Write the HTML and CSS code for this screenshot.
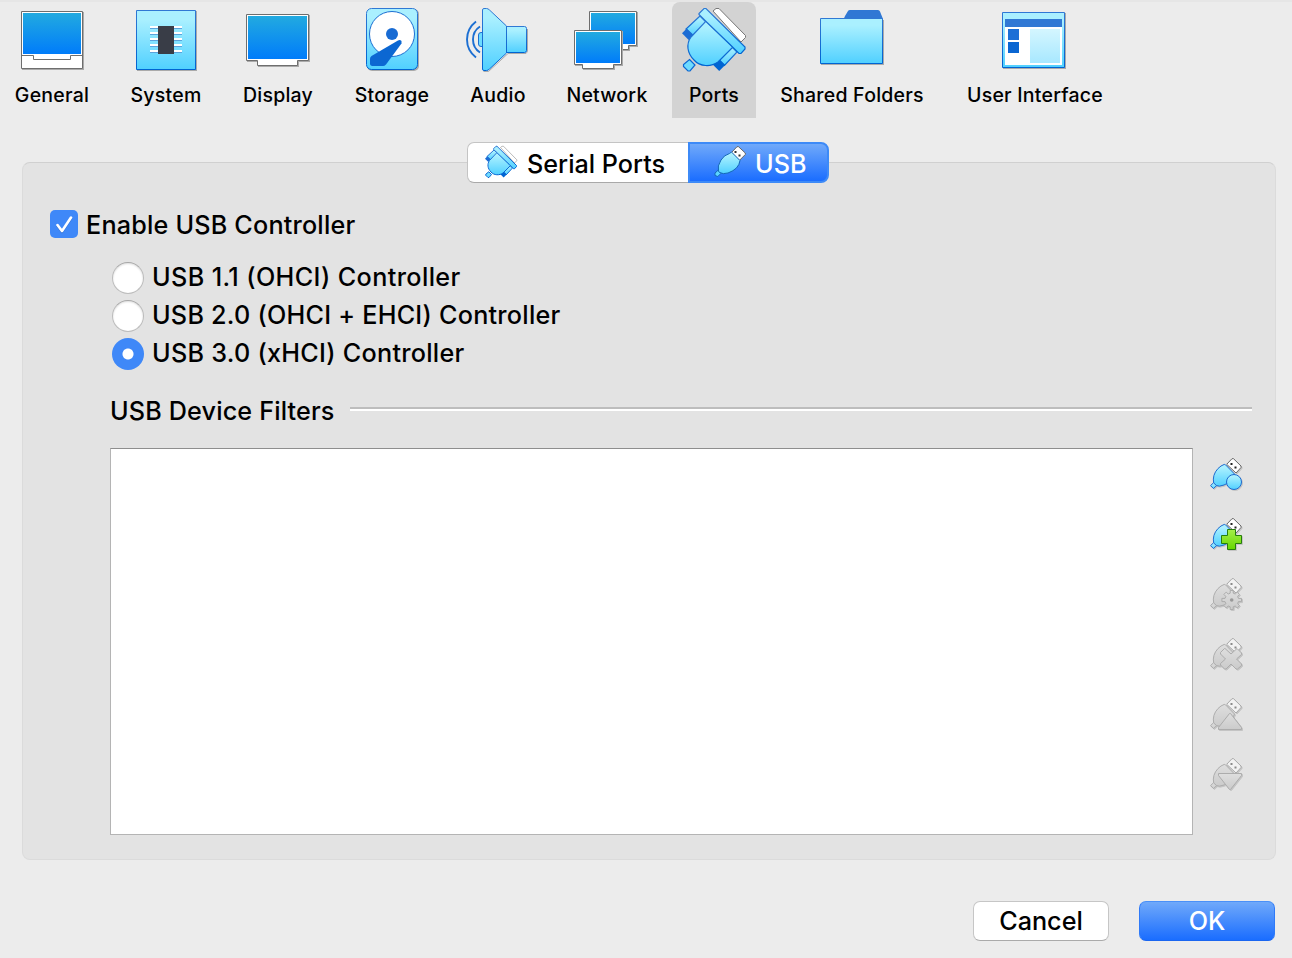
FILE: index.html
```html
<!DOCTYPE html>
<html lang="en">
<head>
<meta charset="utf-8">
<title>Settings - Ports</title>
<link rel="stylesheet" href="styles.css">
</head>
<body>
<svg class="defs" width="0" height="0" aria-hidden="true">
  <defs>
    <linearGradient id="screen" x1="0" y1="0" x2="0" y2="1"><stop offset="0" stop-color="#22aae0"/><stop offset="1" stop-color="#007cfa"/></linearGradient>
    <linearGradient id="aqua" x1="0" y1="0" x2="0" y2="1"><stop offset="0.15" stop-color="#aaf0ff"/><stop offset="1" stop-color="#50d0ff"/></linearGradient>
    <linearGradient id="edge" x1="0" y1="0" x2="0" y2="1"><stop offset="0" stop-color="#3078d4"/><stop offset="1" stop-color="#0064d2"/></linearGradient>
    <linearGradient id="pane" x1="0" y1="0" x2="0" y2="1"><stop offset="0" stop-color="#d4f6ff"/><stop offset="1" stop-color="#a8e8ff"/></linearGradient>
    <linearGradient id="green" x1="0" y1="0" x2="0" y2="1"><stop offset="0" stop-color="#a5ee4a"/><stop offset="1" stop-color="#66d800"/></linearGradient>
    <linearGradient id="gray" x1="0" y1="0" x2="0" y2="1"><stop offset="0" stop-color="#dedede"/><stop offset="1" stop-color="#cbcbcb"/></linearGradient>
    <symbol id="serial" viewBox="678 4 72 72">
      <path class="shell" d="M713 11l3-2.500h3l26.500 27v2l-4.500 4.500z" fill="#fff" stroke="#777"/>
      <path class="line" d="M700 16l-14 13 7 7 14-13z" fill="url(#aqua)" stroke="url(#edge)"/>
      <path d="M686.700 28.500l-4.700 4.800 6.700 6.700 5-5z" fill="#1c6cd4"/>
      <path class="line" d="M730 45l7 7-12.500 13.500-7-7z" fill="url(#aqua)" stroke="url(#edge)"/>
      <path d="M718.700 58.500l6.500 6.500-6 6-6.500-6.500z" fill="#0064d2"/>
      <path class="line" d="M706 21l27 26-15 15c-7 5-18 5-24-2-7-7-8-16-3-23z" fill="url(#aqua)" stroke="url(#edge)"/>
      <path class="line" d="M689.500 59.500l5.500 5.500-5 6h-2l-4.500-4.500v-2z" fill="#6edbff" stroke="#0c67d2"/>
      <path class="line" d="M704 8.500h2l39 38.500v2l-4 4.500h-2l-9-9-25-24-6-6v-1z" fill="url(#aqua)" stroke="url(#edge)"/>
    </symbol>
    <symbol id="plug" viewBox="0 0 32 32">
      <path d="M16.700 6.300L22 .7h1.500L31 8v1.500L26 15z" class="plug-metal"/>
      <path d="M20.500 5h2v2h-2zM24.500 8.500h2v2h-2z" class="plug-holes"/>
      <path d="M14 6.500Q14.800 6.200 15.500 6.800L24.500 16Q22 24 14 27Q9 29 6 27.500L3.700 25Q2 17 8 10.500Q11 7.500 14 6.500z" class="plug-body"/>
      <path d="M3.500 24.800l3 2.800-3 3-3-3z" class="plug-body"/>
    </symbol>
    <symbol id="plug-slim" viewBox="0 0 32 32">
      <path d="M17.500 6.500l5.500-5.800h1.500L31.300 7v1.500l-6 6z" fill="#fff" stroke="#666"/>
      <path d="M20.500 5h2v2h-2zM24.500 8.500h2v2h-2z" fill="#333"/>
      <path d="M15.500 7.500L17.500 6L26 14.500Q25 23 14 27Q9 28.500 5.500 26.500L4.500 25.500Q3 20 7 14Q10 9 15.500 7.500z" fill="url(#aqua)" stroke="#1466b8"/>
      <path d="M3.800 24.500l3 3-3 3-2.800-1v-2.500z" fill="#5cd4ff" stroke="#1466b8"/>
    </symbol>
  </defs>
</svg>

<nav class="toolbar">
  <a class="tool"><svg class="tool-icon" viewBox="16 4 72 72">
    <path d="M22 12h62v58H22z" fill="#aaa"/>
    <path d="M21.500 11.500h61v57h-61z" fill="#fff" stroke="#6e6e6e"/>
    <path d="M23 13h58v41H23z" fill="url(#screen)"/>
    <path d="M21.500 55.500h12v4h37v-4h12" fill="none" stroke="#6e6e6e"/>
  </svg><span>General</span></a>
  <a class="tool"><svg class="tool-icon" viewBox="130 4 72 72">
    <path d="M137 11h60v60h-60z" fill="#aaa"/>
    <path d="M136.500 10.500h59v59h-59z" fill="url(#aqua)" stroke="url(#edge)"/>
    <path d="M150 28.500h32m-32 6h32m-32 6h32m-32 6h32m-32 6h32" stroke="#5ba3dc"/>
    <path d="M150 27h32m-32 6h32m-32 6h32m-32 6h32m-32 6h32" stroke="#fff" stroke-width="2"/>
    <path d="M158 26h16v28h-16z" fill="#393d47"/>
  </svg><span>System</span></a>
  <a class="tool"><svg class="tool-icon" viewBox="242 4 72 72">
    <path d="M247 15h63v47h-11v5h-41v-5h-11z" fill="#aaa"/>
    <path d="M246.500 14.500h62v46h-11v5h-40v-5h-11z" fill="#fff" stroke="#6e6e6e"/>
    <path d="M248 16h59v43h-59z" fill="url(#screen)"/>
  </svg><span>Display</span></a>
  <a class="tool"><svg class="tool-icon" viewBox="356 4 72 72">
    <rect x="367" y="9" width="52" height="62" rx="5" fill="#aaa"/>
    <rect x="366.500" y="8.500" width="51" height="61" rx="5" fill="url(#aqua)" stroke="url(#edge)"/>
    <circle cx="392" cy="34" r="22.500" fill="#fff" stroke="#1c6fd2"/>
    <circle cx="392" cy="34" r="6" fill="#186bd3"/>
    <path d="M398 40.500q2-1 3.500.5v2.500L386 64.500q-1.500 1.500-3 1.500h-11q-2-.5-2-2v-5q0-2 1.500-3z" fill="#0c67d2"/>
  </svg><span>Storage</span></a>
  <a class="tool"><svg class="tool-icon" viewBox="462 4 72 72">
    <path d="M483.500 71.500h5l19.500-18h18l1.500-2V29" fill="none" stroke="#aaa"/>
    <rect x="478.500" y="32.500" width="8" height="14" rx="2.500" fill="#6cdcff" stroke="#1c6fd2"/>
    <rect x="503" y="26.500" width="23.500" height="26" rx="2" fill="url(#aqua)" stroke="url(#edge)"/>
    <path d="M482.500 10q0-1.500 1.500-1.500h2.500q1.500 0 3 1.500l17 16v27l-17 16q-1.500 1.500-3 1.500H484q-1.500 0-1.500-1.500z" fill="url(#aqua)" stroke="url(#edge)"/>
    <path d="M480 26.500q-7 4.500-7 13t7 13M476 21.500q-9 7-9 18t9 18" fill="none" stroke="#1c6fd2" stroke-width="1.900"/>
  </svg><span>Audio</span></a>
  <a class="tool network"><svg class="tool-icon" viewBox="570 4 72 72">
    <path d="M590 12h48v35h-8v4h-28V47h-12z" fill="#aaa"/>
    <path d="M589.500 11.500h47v34h-8v4h-28v-4h-11z" fill="#fff" stroke="#6e6e6e"/>
    <path d="M591 13h44v31h-44z" fill="url(#screen)"/>
    <path d="M575 31h48v35h-8v4h-32v-4h-8z" fill="#aaa"/>
    <path d="M574.500 30.500h47v34h-8v4h-31v-4h-8z" fill="#fff" stroke="#6e6e6e"/>
    <path d="M576 32h44v31h-44z" fill="url(#screen)"/>
  </svg><span>Network</span></a>
  <a class="tool selected"><svg class="tool-icon"><use href="#serial"/></svg><span>Ports</span></a>
  <a class="tool"><svg class="tool-icon" viewBox="816 4 72 72">
    <path d="M821 20h63v45h-63z" fill="#aaa"/>
    <path d="M843 19q1.500-1 2-3l3-5q.5-1 2-1h28q1.500 0 2 1.500l3 7.500z" fill="#3078d4"/>
    <path d="M820.500 18.500h62v45h-62z" fill="url(#aqua)" stroke="url(#edge)"/>
  </svg><span>Shared Folders</span></a>
  <a class="tool"><svg class="tool-icon" viewBox="999 4 72 72">
    <path d="M1003 13h63v56h-63z" fill="#aaa"/>
    <path d="M1002.500 12.500h62v55h-62z" fill="url(#aqua)" stroke="url(#edge)"/>
    <path d="M1005 19h57v46h-57z" fill="#fff"/>
    <path d="M1005 19h57v8h-57z" fill="#3078d4"/>
    <path d="M1008 29h11v11h-11z" fill="#1c6fd6"/><path d="M1008 42h11v11h-11z" fill="#0a66d2"/>
    <path d="M1030 29h30v34h-30z" fill="url(#pane)"/>
  </svg><span>User Interface</span></a>
</nav>

<div class="tabs">
  <div class="tab tab-serial"><svg class="tab-icon"><use href="#serial"/></svg><span>Serial Ports</span></div>
  <div class="tab tab-usb"><svg class="usb-icon"><use href="#plug-slim"/></svg><span>USB</span></div>
</div>

<main class="panel">
  <label class="enable"><span class="checkbox"><svg viewBox="0 0 28 28"><path d="M7.500 15l4.500 6L21 7.500" fill="none" stroke="#fff" stroke-width="2.600" stroke-linecap="round" stroke-linejoin="round"/></svg></span><span class="text t-enable">Enable USB Controller</span></label>
  <div class="radios">
    <label class="option"><span class="radio"></span><span class="text t-ohci">USB 1.1 (OHCI) Controller</span></label>
    <label class="option"><span class="radio"></span><span class="text t-ehci">USB 2.0 (OHCI + EHCI) Controller</span></label>
    <label class="option"><span class="radio checked"></span><span class="text t-xhci">USB 3.0 (xHCI) Controller</span></label>
  </div>
  <div class="heading"><span class="text t-filters">USB Device Filters</span><span class="rule"></span></div>
  <div class="filters">
    <div class="list"></div>
    <div class="actions">
      <svg class="action" viewBox="0 0 32 32"><use href="#plug" width="32" height="32"/><circle cx="24" cy="24" r="7.500" class="plug-body"/></svg>
      <svg class="action" viewBox="0 0 32 32"><use href="#plug" width="32" height="32"/><path d="M17.500 11.500h8v6h6v8h-6v6h-8v-6h-6v-8h6z" fill="url(#green)" stroke="#267d0c"/></svg>
      <svg class="action off" viewBox="0 0 32 32"><use href="#plug" width="32" height="32"/><path class="plug-body" d="M20.200 12.500h3v2.700l2 .8 2-1.900 2.300 2.300-1.900 2 .8 2h3.100v3.200h-3.100l-.8 2 1.900 2-2.300 2.300-2-1.900-2 .8v2.700h-3v-2.700l-2-.8-2 1.900-2.300-2.300 1.900-2-.8-2h-3.100v-3.200h3.100l.8-2-1.900-2 2.300-2.300 2 1.900 2-.8z"/><circle cx="21.700" cy="22" r="1.800" fill="#999"/></svg>
      <svg class="action off" viewBox="0 0 32 32"><use href="#plug" width="32" height="32"/><path class="plug-body" d="M15 10.500l6 5.500 6-5.500 4.500 4.500v1.500L26.500 21l5 5v1.500L27.500 31H26l-5-5-5 5h-1.500l-4-4v-1.500l5-4.500-5-5V14.500l4-4z"/></svg>
      <svg class="action off" viewBox="0 0 32 32"><use href="#plug" width="32" height="32"/><path class="plug-body" d="M19.500 15.500h1l11 14v2h-23v-2z"/></svg>
      <svg class="action off" viewBox="0 0 32 32"><use href="#plug" width="32" height="32"/><path class="plug-body" d="M8.500 15.500h23v2l-11 14h-1l-11-14z"/></svg>
    </div>
  </div>
</main>

<footer class="footer"><button class="button cancel">Cancel</button><button class="button ok">OK</button></footer>
</body>
</html>
```
FILE: styles.css
```css
* { box-sizing: border-box; }
body {
  margin: 0;
  width: 1292px;
  height: 958px;
  overflow: hidden;
  background: #ececec;
  border-top: 2px solid #e6e6e6;
  color: #000;
  font-family: Inter, "Liberation Sans", sans-serif;
  font-size: 25.200px;
}
.defs { display: block; }
.toolbar {
  display: grid;
  grid-template-columns: 104px 124px 100px 128px 84px 132px 84px 192px 174px;
  height: 116px;
}
.tool {
  display: flex;
  flex-direction: column;
  align-items: center;
  padding-top: 2px;
  font-size: 19.500px;
  font-weight: 530;
  line-height: 24px;
  letter-spacing: 0.230px;
  white-space: nowrap;
}
.tool-icon { width: 72px; height: 72px; margin-bottom: 7px; flex: none; --w: 1.2; }
.network span { padding-left: 2px; }
.selected { background: #d3d3d3; border-radius: 8px 8px 0 0; }
.line { stroke-width: var(--w); }

.tabs {
  position: relative;
  display: flex;
  width: 362px;
  height: 41px;
  margin: 24px 0 0 467px;
}
.tab { display: flex; align-items: center; font-weight: 500; white-space: nowrap; }
.tab span { padding-top: 2px; }
.tab-serial {
  width: 221px;
  padding-left: 15px;
  gap: 8px;
  background: #fff;
  border: 1px solid #c4c4c4;
  border-right: 0;
  border-bottom-color: #a9a9a9;
  border-radius: 7px 0 0 7px;
}
.tab-usb {
  width: 141px;
  padding-left: 24px;
  gap: 9px;
  color: #fff;
  background: linear-gradient(#70a9fa, #1a6dff);
  border: 2px solid #3d8af7;
  border-radius: 0 8px 8px 0;
}
.tab-icon { width: 36px; height: 36px; margin-top: -1px; --w: 2; }
.usb-icon { width: 32px; height: 32px; margin-top: -1px; }

.panel {
  width: 1254px;
  height: 698px;
  margin: -21px 0 0 22px;
  padding: 47px 23px 0 27px;
  background: #e3e3e3;
  border: 1px solid #dbdbdb;
  border-top-color: #d0d0d0;
  border-radius: 8px;
}
.text { white-space: nowrap; line-height: 30px; font-weight: 450; }
.t-enable { letter-spacing: 0.190px; padding-top: 2px; }
.t-ohci { letter-spacing: 0.380px; }
.t-ehci { letter-spacing: 0.230px; }
.t-xhci { letter-spacing: 0.260px; }
.t-filters { width: 240px; letter-spacing: 0.150px; }
.enable { display: flex; align-items: center; gap: 8px; height: 28px; }
.checkbox { width: 28px; height: 28px; border-radius: 5px; background: #3f88f8; }
.checkbox svg { display: block; filter: drop-shadow(0 1px 0 #0002); }
.radios { margin: 20px 0 0 62px; }
.option { display: flex; align-items: center; gap: 8px; height: 38px; }
.radio {
  width: 32px;
  height: 32px;
  margin-top: 2px;
  border: 1px solid #bcbcbc;
  border-top-color: #a6a6a6;
  border-radius: 50%;
  background: #fff;
  box-shadow: inset 0 1px 2px #ddd;
}
.radio.checked { border: 0; background: radial-gradient(circle, #fff 5px, #3f88f8 6px); box-shadow: none; }
.heading { display: flex; align-items: center; height: 30px; margin: 24px 0 0 60px; }
.rule { flex: 1; height: 4px; margin-top: -4px; border-top: 2px solid #bdbdbd; border-bottom: 2px solid #fff; }
.filters { display: flex; gap: 17px; margin: 22px 0 0 60px; }
.list { width: 1083px; height: 387px; background: #fff; border: 1px solid #b4b4b4; border-top-color: #8e8e8e; }
.actions { display: flex; flex-direction: column; gap: 28px; padding-top: 10px; }
.action {
  --body: url(#aqua);
  --line: #1c6ace;
  --metal: #fff;
  --metal-line: #666;
  --holes: #222;
  width: 32px;
  height: 32px;
  filter: drop-shadow(1px 1px 0 #0002);
}
.action.off {
  --body: url(#gray);
  --line: #acacac;
  --metal: #f2f2f2;
  --metal-line: #a8a8a8;
  --holes: #8a8a8a;
}
.plug-body { fill: var(--body); stroke: var(--line); }
.plug-metal { fill: var(--metal); stroke: var(--metal-line); }
.plug-holes { fill: var(--holes); }

.footer { display: flex; justify-content: flex-end; gap: 30px; padding: 41px 17px 0 0; }
.button {
  width: 136px;
  height: 40px;
  padding: 0;
  font: 500 25.200px/38px Inter, "Liberation Sans", sans-serif;
  border: 1px solid #c6c6c6;
  border-bottom-color: #aaa;
  border-radius: 7px;
  background: #fff;
  color: #000;
}
.ok { color: #fff; background: linear-gradient(#70a9fa, #1a6dff); border-color: #4a90f8 #2f7af8 #1a66f0; }
```
